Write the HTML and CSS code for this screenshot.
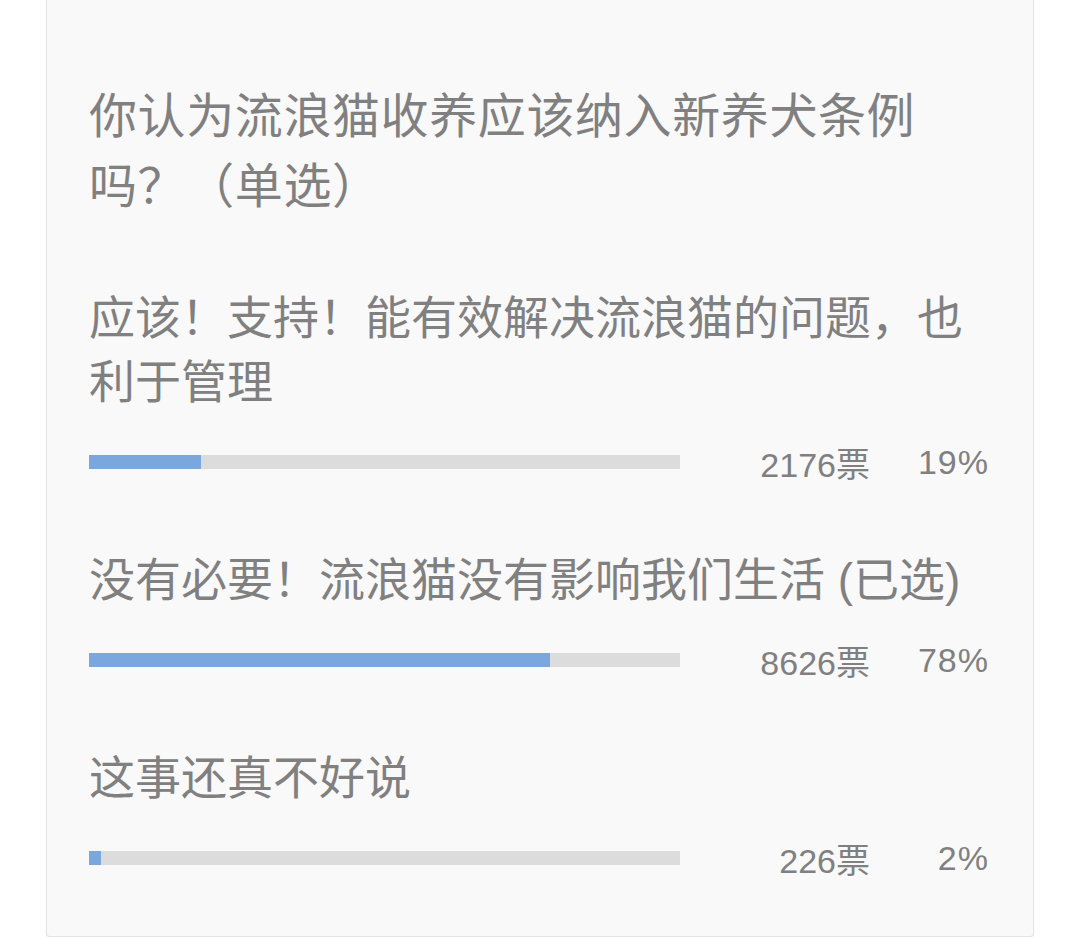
FILE: index.html
```html
<!DOCTYPE html>
<html lang="zh-CN">
<head>
    <meta charset="UTF-8">
    <meta name="viewport" content="width=device-width, initial-scale=1.0">
    <title>投票</title>
    <link rel="stylesheet" href="styles.css">
</head>
<body>
    <div class="vote-card">
        <div class="vote-title">你认为流浪猫收养应该纳入新养犬条例吗？（单选）</div>

        <div class="option">
            <div class="option-text">应该！支持！能有效解决流浪猫的问题，也利于管理</div>
            <div class="option-stats">
                <div class="bar"><div class="bar-fill" style="width: 19%"></div></div>
                <span class="votes">2176票</span>
                <span class="percent">19%</span>
            </div>
        </div>

        <div class="option">
            <div class="option-text">没有必要！流浪猫没有影响我们生活 (已选)</div>
            <div class="option-stats">
                <div class="bar"><div class="bar-fill" style="width: 78%"></div></div>
                <span class="votes">8626票</span>
                <span class="percent">78%</span>
            </div>
        </div>

        <div class="option">
            <div class="option-text">这事还真不好说</div>
            <div class="option-stats">
                <div class="bar"><div class="bar-fill" style="width: 2%"></div></div>
                <span class="votes">226票</span>
                <span class="percent">2%</span>
            </div>
        </div>
    </div>
</body>
</html>
```

FILE: styles.css
```css
body {
    margin: 0;
    padding: 0;
    background-color: #fff;
    font-family: "Liberation Sans", "Noto Sans CJK SC", sans-serif;
    color: #808080;
}
.vote-card {
    box-sizing: border-box;
    width: 988px;
    height: 937px;
    margin: 0 0 0 46px;
    padding: 77px 42px 0 42px;
    background-color: #f9f9f9;
    border: 1px solid #e4e4e4;
    border-top: none;
    border-radius: 0 0 4px 4px;
    box-shadow: 0 1px 2px rgba(0, 0, 0, 0.05);
}
.vote-title {
    font-family: "Noto Sans CJK SC", sans-serif;
    font-size: 48px;
    letter-spacing: 0.6px;
    line-height: 70px;
    padding-bottom: 3px;
}
.option {
    margin-top: 66px;
}
.option-text {
    font-size: 46px;
    line-height: 64px;
}
.option-stats {
    display: flex;
    align-items: center;
    height: 40px;
    margin-top: 28px;
    font-size: 34px;
}
.bar {
    width: 591px;
    height: 14px;
    background-color: #dcdcdc;
}
.bar-fill {
    height: 100%;
    background-color: #79a7de;
}
.votes {
    width: 190px;
    text-align: right;
}
.percent {
    width: 119px;
    text-align: right;
    letter-spacing: 1px;
}
```
